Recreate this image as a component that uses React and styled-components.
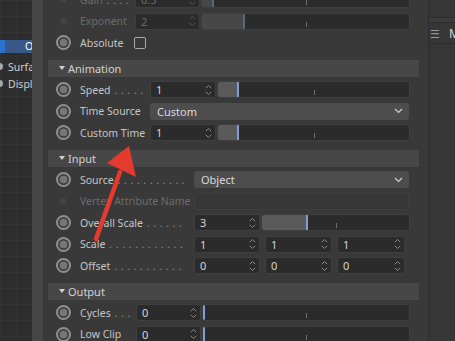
import styled, { createGlobalStyle } from "styled-components";

const GlobalStyle = createGlobalStyle`
  html, body {
    margin: 0;
    padding: 0;
    background: #393939;
  }
  body {
    font-family: "Noto Sans", "DejaVu Sans", sans-serif;
  }
`;

const Screen = styled.div`
  position: relative;
  display: flex;
  width: 455px;
  height: 341px;
  overflow: hidden;
  font-size: 10.5px;
  color: #c4c4c4;
`;

/* left: object manager peeking out */
const ObjectList = styled.div`
  width: 32px;
  flex: none;
  overflow: hidden;
  padding-top: 40px;
  background-color: #2d2d2d;
  background-image: linear-gradient(#333 1px, transparent 1px),
    linear-gradient(90deg, #333 1px, transparent 1px);
  background-size: 16px 16px;
`;

const ListHeader = styled.div`
  height: 13px;
  line-height: 13px;
  padding-left: 20px;
  border-left: 5px solid #2a72d0;
  background: #3a5789;
  color: #fff;
  white-space: nowrap;
  margin-bottom: 5px;
`;

const ListRow = styled.div`
  display: flex;
  align-items: center;
  gap: 5px;
  height: 17px;
  margin-left: -4px;
  white-space: nowrap;
  color: #cfcfcf;
`;

const ListDot = styled.span`
  width: 7px;
  height: 7px;
  flex: none;
  border-radius: 50%;
  background: #a8a8a8;
`;

const Frame = styled.div`
  width: 11px;
  flex: none;
  background: #464646;
`;

/* attribute manager */
const Panel = styled.div`
  width: 385px;
  flex: none;
  overflow: hidden;
  padding: 0 9px 0 5px;
  box-sizing: border-box;
  background: #393939;
`;

const Scroll = styled.div`
  margin-top: -11px;
`;

const Section = styled.div`
  margin-top: ${(p) => (p.$first ? 0 : 6.5)}px;
`;

const Header = styled.div`
  display: flex;
  align-items: center;
  gap: 3px;
  height: 16.5px;
  margin-bottom: 2.5px;
  padding-left: 11px;
  background: #474747;
  color: #d2d2d2;
  font-size: 11px;
`;

const Caret = styled.span`
  width: 0;
  height: 0;
  border-left: 3.5px solid transparent;
  border-right: 3.5px solid transparent;
  border-top: 4px solid #d2d2d2;
`;

const Row = styled.div`
  display: flex;
  align-items: center;
  height: 21.5px;
  padding-right: 9px;
`;

const RadioSlot = styled.div`
  width: 32px;
  flex: none;
  display: flex;
  align-items: center;
  justify-content: center;
  padding-right: 2px;
  box-sizing: border-box;
`;

const Radio = styled.span`
  width: 15px;
  height: 15px;
  box-sizing: border-box;
  border-radius: 50%;
  border: 2px solid #8f8f8f;
  background: radial-gradient(circle, #767676 0 3.6px, #3e3e3e 4.2px);
`;

const DimDot = styled.span`
  width: 7px;
  height: 7px;
  border-radius: 50%;
  background: #434343;
`;

const Label = styled.div`
  width: ${(p) => p.$w}px;
  flex: none;
  display: flex;
  white-space: nowrap;
  color: ${(p) => (p.$off ? "#6c6c6c" : "#c6c6c6")};
`;

const Dots = styled.span`
  padding-left: 4px;
  letter-spacing: 3.6px;
  color: #8c8c8c;
`;

const NumField = styled.div`
  width: ${(p) => p.$w || 66}px;
  height: 17px;
  flex: none;
  box-sizing: border-box;
  display: flex;
  align-items: center;
  justify-content: space-between;
  padding: 0 3px 0 5px;
  border: 1px solid #3f3f3f;
  border-radius: 3px;
  background: #2b2b2b;
  color: ${(p) => (p.$off ? "#6c6c6c" : "#d6d6d6")};
  font-size: 11px;
`;

const SpinIcon = styled.svg`
  width: 7px;
  height: 12px;
  flex: none;
`;

const Spin = ({ off }) => (
  <SpinIcon viewBox="0 0 7 12">
    <path
      d="M0.8 4.2 L3.5 1.5 L6.2 4.2 M0.8 7.8 L3.5 10.5 L6.2 7.8"
      fill="none"
      stroke={off ? "#555" : "#8a8a8a"}
      strokeWidth="1"
    />
  </SpinIcon>
);

const Slider = styled.div`
  position: relative;
  flex: 1;
  display: flex;
  height: 17px;
  margin-left: 1px;
  box-sizing: border-box;
  overflow: hidden;
  border: 1px solid #3f3f3f;
  border-radius: 3px;
  background: #2b2b2b;
`;

const Fill = styled.div`
  width: ${(p) => p.$pct}%;
  flex: none;
  background: ${(p) => (p.$off ? "#474747" : "#5a5a5a")};
  border-right: 2px solid ${(p) => (p.$off ? "#56677f" : "#7f9fd4")};
`;

const Tick = styled.span`
  position: absolute;
  left: 50%;
  bottom: 2px;
  width: 1px;
  height: 5px;
  background: #6e6e6e;
`;

const Dropdown = styled.div`
  flex: 1;
  height: 17px;
  margin-right: 1px;
  box-sizing: border-box;
  display: flex;
  align-items: center;
  justify-content: space-between;
  padding: 0 6px 0 7px;
  border-radius: 3px;
  background: #4d4d4d;
  color: #dadada;
  font-size: 11px;
`;

const Chevron = styled.svg`
  width: 9px;
  height: 6px;
`;

const TextField = styled.div`
  flex: 1;
  height: 17px;
  margin-right: 1px;
  box-sizing: border-box;
  border: 1px solid #3f3f3f;
  border-radius: 3px;
  background: #373737;
`;

const Check = styled.span`
  width: 12px;
  height: 12px;
  box-sizing: border-box;
  border: 1px solid #a7a7a7;
  border-radius: 2px;
`;

const Vector = styled.div`
  display: flex;
  gap: 5px;
`;

/* right: another manager */
const Side = styled.div`
  flex: 1;
  overflow: hidden;
  background: #363636;
  border-left: 1px solid #2c2c2c;
  color: #d4d4d4;
  font-size: 12px;
`;

const SideBands = styled.div`
  height: 4px;
  margin-top: 17px;
  border-top: 1px solid #2e2e2e;
  border-bottom: 1px solid #2e2e2e;
  background: #3c3c3c;
`;

const SideHead = styled.div`
  display: flex;
  align-items: center;
  gap: 9px;
  height: 20px;
  padding-left: 1px;
  border-bottom: 1px solid #2e2e2e;
  white-space: nowrap;
`;

const Burger = styled.span`
  color: #9c9c9c;
  font-size: 11px;
`;

const Overlay = styled.svg`
  position: absolute;
  left: 0;
  top: 0;
  width: 455px;
  height: 341px;
  pointer-events: none;
`;

const Num = ({ v, w, off }) => (
  <NumField $w={w} $off={off}>
    <span>{v}</span>
    <Spin off={off} />
  </NumField>
);

const SliderField = ({ v, off, w = 66 }) => (
  <>
    <Num v={v} w={w} off={off} />
    <Slider>
      <Fill $pct={(parseFloat(v) / 10) * 100} $off={off} />
      <Tick />
    </Slider>
  </>
);

const Select = ({ v }) => (
  <Dropdown>
    <span>{v}</span>
    <Chevron viewBox="0 0 9 6">
      <path d="M1 1 L4.5 4.5 L8 1" fill="none" stroke="#cfcfcf" strokeWidth="1.2" />
    </Chevron>
  </Dropdown>
);

const Param = ({ name, w, dots = 0, off, children }) => (
  <Row>
    <RadioSlot>{off ? <DimDot /> : <Radio />}</RadioSlot>
    <Label $w={w} $off={off}>
      <span>{name}</span>
      {dots > 0 && <Dots>{".".repeat(dots)}</Dots>}
    </Label>
    {children}
  </Row>
);

export default function App() {
  return (
    <Screen>
      <GlobalStyle />
      <ObjectList>
        <ListHeader>Objects</ListHeader>
        <ListRow>
          <ListDot />
          Surface
        </ListRow>
        <ListRow>
          <ListDot />
          Displace
        </ListRow>
      </ObjectList>
      <Frame />
      <Panel>
        <Scroll>
          <Section $first>
            <Param name="Gain" w={55} dots={4} off>
              <SliderField v="0.5" w={65} off />
            </Param>
            <Param name="Exponent" w={55} off>
              <SliderField v="2" w={65} off />
            </Param>
            <Param name="Absolute" w={54}>
              <Check />
            </Param>
          </Section>

          <Section>
            <Header>
              <Caret />
              Animation
            </Header>
            <Param name="Speed" w={70} dots={5}>
              <SliderField v="1" />
            </Param>
            <Param name="Time Source" w={70}>
              <Select v="Custom" />
            </Param>
            <Param name="Custom Time" w={70}>
              <SliderField v="1" />
            </Param>
          </Section>

          <Section>
            <Header>
              <Caret />
              Input
            </Header>
            <Param name="Source" w={114} dots={11}>
              <Select v="Object" />
            </Param>
            <Param name="Vertex Attribute Name" w={114} off>
              <TextField />
            </Param>
            <Param name="Overall Scale" w={114} dots={6}>
              <SliderField v="3" />
            </Param>
            <Param name="Scale" w={114} dots={12}>
              <Vector>
                <Num v="1" w={66} />
                <Num v="1" w={67} />
                <Num v="1" w={68} />
              </Vector>
            </Param>
            <Param name="Offset" w={114} dots={11}>
              <Vector>
                <Num v="0" w={66} />
                <Num v="0" w={67} />
                <Num v="0" w={68} />
              </Vector>
            </Param>
          </Section>

          <Section>
            <Header>
              <Caret />
              Output
            </Header>
            <Param name="Cycles" w={56} dots={3}>
              <SliderField v="0" w={65} />
            </Param>
            <Param name="Low Clip" w={56}>
              <SliderField v="0" w={65} />
            </Param>
          </Section>
        </Scroll>
      </Panel>
      <Side>
        <SideBands />
        <SideHead>
          <Burger>☰</Burger>
          Mode
        </SideHead>
      </Side>

      <Overlay viewBox="0 0 455 341">
        <line x1="96" y1="239" x2="120" y2="172" stroke="#e53a2e" strokeWidth="4.5" strokeLinecap="round" />
        <polygon points="129,146 107,163 136,177" fill="#e53a2e" />
      </Overlay>
    </Screen>
  );
}
